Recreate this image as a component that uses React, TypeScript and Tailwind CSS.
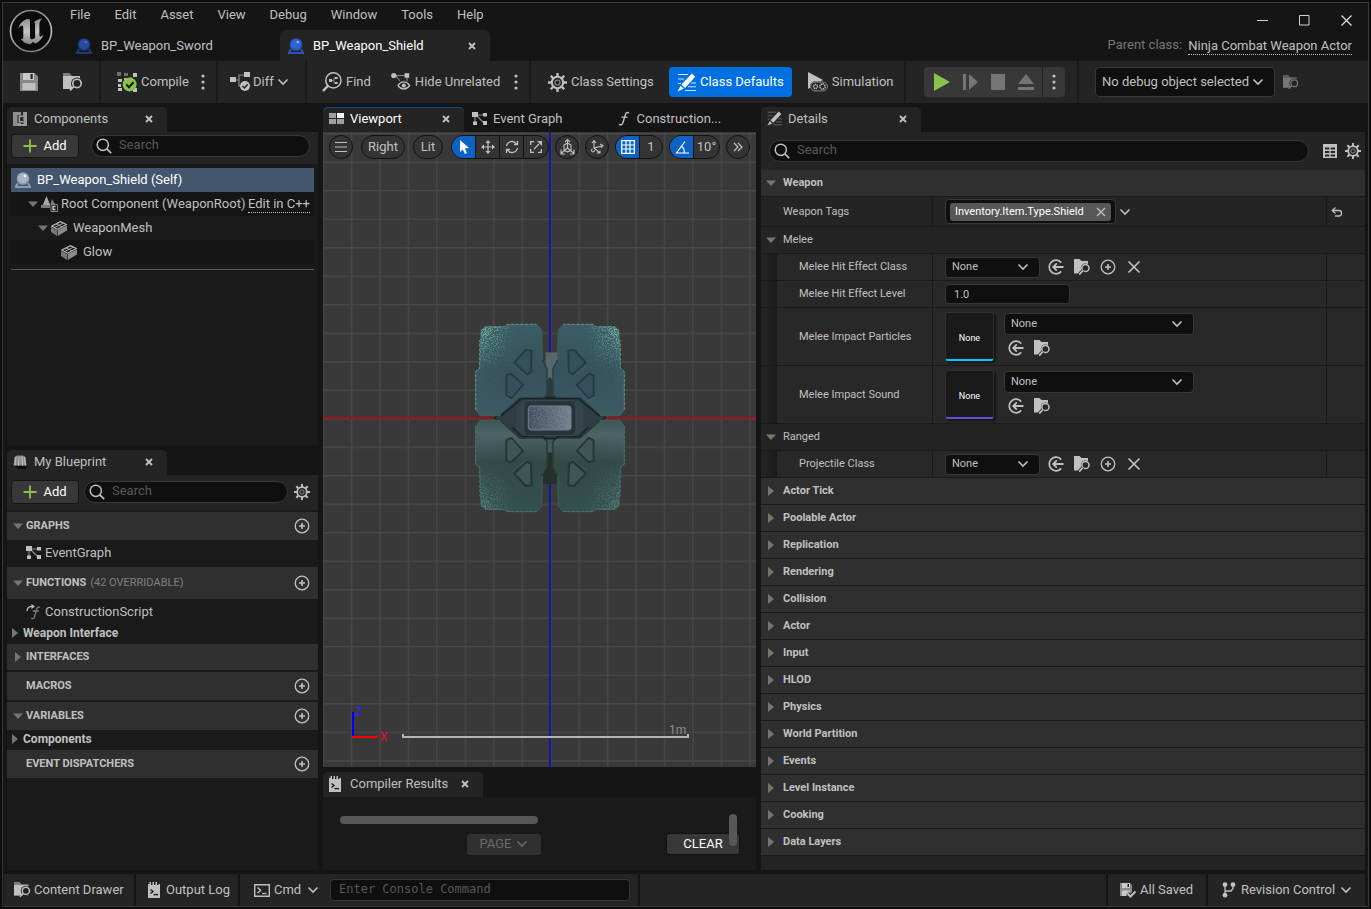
import type { ReactNode } from "react";

type Kids = { children?: ReactNode };

/* ---------- icons ---------- */

function Svg({ w = 16, h, vb, children }: { w?: number; h?: number; vb?: string } & Kids) {
  const height = h ?? w;
  return (
    <svg width={w} height={height} viewBox={vb ?? `0 0 ${w} ${height}`} fill="none" className="shrink-0" aria-hidden="true">
      {children}
    </svg>
  );
}

const Chevron = ({ color = "#c0c0c0" }: { color?: string }) => (
  <Svg w={12} h={8}>
    <path d="M1.5 1.5 6 6 10.5 1.5" stroke={color} strokeWidth="1.6" />
  </Svg>
);

const Close = ({ color = "#c0c0c0" }: { color?: string }) => (
  <Svg w={8}>
    <path d="M1 1 7 7M7 1 1 7" stroke={color} strokeWidth="1.9" />
  </Svg>
);

const BigCross = () => (
  <Svg w={14}>
    <path d="M1.5 1.5 12.5 12.5M12.5 1.5 1.5 12.5" stroke="#c0c0c0" strokeWidth="1.7" />
  </Svg>
);

const Dots = () => (
  <Svg w={4} h={16}>
    <circle cx="2" cy="2" r="1.6" fill="#c0c0c0" />
    <circle cx="2" cy="8" r="1.6" fill="#c0c0c0" />
    <circle cx="2" cy="14" r="1.6" fill="#c0c0c0" />
  </Svg>
);

const Arrow = ({ open }: { open?: boolean }) => (
  <Svg w={10}>{open ? <path d="M0 2.5h10L5 8z" fill="#757575" /> : <path d="M2 0v10l6-5z" fill="#757575" />}</Svg>
);

const SearchIcon = () => (
  <Svg w={16}>
    <circle cx="6.8" cy="6.8" r="5.6" stroke="#c0c0c0" strokeWidth="1.5" />
    <path d="m10.8 10.8 4.4 4.4" stroke="#c0c0c0" strokeWidth="1.7" />
  </Svg>
);

const PlusGreen = () => (
  <Svg w={14}>
    <path d="M7 0.5v13M0.5 7h13" stroke="#8bc24a" strokeWidth="1.8" />
  </Svg>
);

const CirclePlus = () => (
  <Svg w={16}>
    <circle cx="8" cy="8" r="6.8" stroke="#c0c0c0" strokeWidth="1.3" />
    <path d="M8 5v6M5 8h6" stroke="#c0c0c0" strokeWidth="1.6" />
  </Svg>
);

const Gear = ({ size = 16 }: { size?: number }) => (
  <Svg w={size} vb="0 0 18 18">
    <circle cx="9" cy="9" r="5.4" stroke="#c0c0c0" strokeWidth="2" />
    <circle cx="9" cy="9" r="2.4" stroke="#8c8c8c" strokeWidth="1.1" />
    <path
      d="M9 0v3.4M9 14.6V18M0 9h3.4M14.6 9H18M2.6 2.6l2.5 2.5M12.9 12.9l2.5 2.5M15.4 2.6l-2.5 2.5M5.1 12.9l-2.5 2.5"
      stroke="#c0c0c0"
      strokeWidth="2.2"
    />
  </Svg>
);

const Sphere = ({ base, ball, shine }: { base: string; ball: string; shine: string }) => (
  <Svg w={16}>
    <path d="M2.4 10.5 0 14v2h16v-2l-2.4-3.5-1.4 1.3 1.2 2.2H2.6l1.2-2.2z" fill={base} />
    <circle cx="8" cy="6.5" r="6.3" fill={base} />
    <circle cx="8" cy="6.3" r="5" fill={ball} />
    <circle cx="9.8" cy="4" r="1.3" fill={shine} />
  </Svg>
);

const Floppy = () => (
  <Svg w={18}>
    <path d="M0 0h14.5L18 3.5V18H0z" fill="#8a8a8a" />
    <path d="M3 0h11v7H3z" fill="#c8c8c8" />
    <path d="M10.5 1h2.2v5h-2.2z" fill="#242424" />
    <path d="M2.5 10h13v7h-13z" fill="#c0c0c0" />
  </Svg>
);

const BrowseFolder = ({ w = 20, dim = false, bg = "#242424" }: { w?: number; dim?: boolean; bg?: string }) => (
  <Svg w={w} h={(w * 18) / 20} vb="0 0 20 18">
    <path d="M0 0h6.5l2.5 3H0z" fill={dim ? "#5a5a5a" : "#7d7d7d"} />
    <path d="M0 3h17v13H0z" fill={dim ? "#757575" : "#c0c0c0"} />
    <circle cx="14" cy="10.4" r="6" fill={bg} />
    <path d="m12 12.5-5.5 5.5h7.5z" fill={bg} />
    <circle cx="14" cy="10.4" r="4.2" stroke={dim ? "#757575" : "#c0c0c0"} strokeWidth="1.6" />
    <path d="m11 13.4-4 4" stroke={dim ? "#757575" : "#c0c0c0"} strokeWidth="1.8" />
  </Svg>
);

const AssetBrowse = () => (
  <Svg w={18} h={16}>
    <path d="M1 0h5.5l2 2H15v3a6 6 0 0 0-6.5 8L7 14.5H1z" fill="#c0c0c0" />
    <circle cx="12.4" cy="9" r="4.6" fill="#282828" />
    <circle cx="12.4" cy="9" r="3.6" stroke="#c0c0c0" strokeWidth="1.5" />
    <path d="m9.8 11.6-3.6 4" stroke="#282828" strokeWidth="3.5" />
    <path d="m9.8 11.6-3.6 4" stroke="#c0c0c0" strokeWidth="1.7" />
  </Svg>
);

const UseSelected = () => (
  <Svg w={16}>
    <path d="M13.2 3.6A6.8 6.8 0 1 0 13.2 12.4" stroke="#c0c0c0" strokeWidth="1.7" />
    <path d="M15.5 8H5.5M8.8 4.4 5.2 8l3.6 3.6" stroke="#c0c0c0" strokeWidth="1.8" />
  </Svg>
);

const CompileIcon = () => (
  <Svg w={20}>
    <path d="M0 0h4v4H0z M7 1h4v3H7z M13 5h2v2h-2z" fill="#6f6f6f" />
    <path d="M16 1h4v4h-4z M1 7h4v3H1z M1 12h3v3H1z M1 16h4v3H1z M16 16h4v4h-4z M7 6h3v2H7z" fill="#c0c0c0" />
    <circle cx="12.6" cy="12.4" r="7" fill="#8bc24a" />
    <path d="m9.3 12.4 2.6 2.8 4.6-5" stroke="#151515" strokeWidth="2" />
  </Svg>
);

const DiffIcon = () => (
  <Svg w={20} h={20}>
    <path d="M5 8h4V3h5M9 8v6h2" stroke="#8a8a8a" strokeWidth="1.2" />
    <path d="M0 5h6v5H0z M14 0h6v5h-6z" fill="#c0c0c0" />
    <circle cx="15" cy="14" r="5" fill="#c0c0c0" />
    <path d="m12.4 14 2 2 3.3-3.8" stroke="#242424" strokeWidth="1.5" />
  </Svg>
);

const FindIcon = () => (
  <Svg w={20}>
    <circle cx="11.4" cy="8.4" r="7.6" stroke="#c0c0c0" strokeWidth="1.5" />
    <path d="M6.2 13.6 1 19" stroke="#c0c0c0" strokeWidth="2.4" />
    <path d="M7 7h3v3H7z M12.6 5h3v2h-3z M12.6 10h3v2h-3z" fill="#c0c0c0" />
    <path d="M10 8.5h2V6M12 8.5V11" stroke="#8a8a8a" />
  </Svg>
);

const HideIcon = () => (
  <Svg w={20}>
    <path d="M3 3.5h13M5 4l4 5M16 5v4" stroke="#8a8a8a" strokeWidth="1.1" />
    <circle cx="2.8" cy="3.5" r="2.6" fill="#c0c0c0" />
    <path d="M13.6 1.2h4.6v4.6h-4.6z" fill="#c0c0c0" />
    <path d="M7 13.6c3-5 8.6-5 11.6 0-3 4.4-8.6 4.4-11.6 0z" stroke="#c0c0c0" strokeWidth="1.4" />
    <circle cx="12.8" cy="13.5" r="2" fill="#c0c0c0" />
  </Svg>
);

const PencilIcon = ({ w = 19, color = "#fff", line = "#cfe3fb" }: { w?: number; color?: string; line?: string }) => (
  <Svg w={w} vb="0 0 19 19">
    <path d="M1 1.5h10M1 6h6M1 10.5h3M14 10h5M11 13.8h8M8 17.5h11" stroke={line} strokeWidth="1.1" />
    <path d="m14.8 0.5 3.4 3.2L8 15l-3.5-3.4z M3.6 12.8 6.7 15.8 0.5 18.5z" fill={color} />
  </Svg>
);

const SimulationIcon = () => (
  <Svg w={20}>
    <path d="M0 0v17L15 8z" fill="#c0c0c0" />
    <rect x="2" y="9.5" width="18" height="10" rx="5" fill="#242424" />
    <rect x="2.6" y="10.1" width="16.8" height="8.8" rx="4.4" stroke="#8a8a8a" />
    <circle cx="7.5" cy="14.5" r="2" stroke="#c0c0c0" strokeWidth="1.5" strokeDasharray="1.1 0.5" />
    <circle cx="14.5" cy="14.5" r="2.6" stroke="#c0c0c0" strokeWidth="1.6" strokeDasharray="1.3 0.7" />
  </Svg>
);

const GraphIcon = () => (
  <Svg w={15} h={14}>
    <path d="M4 3h8M4 3l8 8M3 4v8" stroke="#8a8a8a" strokeWidth="1.2" />
    <path d="M0 0h6v5H0z M11 1h4v3.5h-4z M11 9h4v4h-4z M1 9.5h4V13H1z" fill="#c0c0c0" />
  </Svg>
);

const FuncIcon = () => (
  <Svg w={12} h={15}>
    <path d="M11 2.2C9.3.8 7.8 1.6 7.2 4L5 11.5c-.6 2-2 2.8-4 2" stroke="#c0c0c0" strokeWidth="1.4" />
    <path d="M3.5 6.2h6" stroke="#c0c0c0" strokeWidth="1.3" />
  </Svg>
);

const ConstructionIcon = () => (
  <Svg w={15} h={16}>
    <path d="M14 3.5c-1.7-1-3 0-3.4 1.7l-2 7.3c-.4 1.8-1.6 2.6-3.6 2M6.8 7h6" stroke="#7c7c7c" strokeWidth="1.3" />
    <path d="M1 7c.2-3.5 2.5-4.6 5.5-4.6" stroke="#c0c0c0" strokeWidth="1.3" />
    <path d="M5.5 0v5L9 2.5z" fill="#c0c0c0" />
  </Svg>
);

const ComponentsIcon = () => (
  <Svg w={14}>
    <path d="M0 0h8v3H4.5v8H8v3H0z" fill="#8f8f8f" />
    <path d="M10 0h4v14H5v-2h5.5z" fill="#9c9c9c" />
    <path d="M10.5 4.5H6.5v5h4" stroke="#a8a8a8" strokeWidth="1.8" />
    <path d="M10.5 5.4H7.5v3.2h3" stroke="#242424" strokeWidth="1" />
  </Svg>
);

const BlueprintIcon = () => (
  <Svg w={14} h={14}>
    <path d="M1.5 2 4 .5h6L12.5 2l1 8.5H.5z" fill="#8a8a8a" />
    <path d="M3 2 2 10.5M6 1.5l-.5 9M9 1.5l.5 9M11.5 2l.8 8.5" stroke="#c0c0c0" />
    <path d="M1 11h11.5l1.5 1.5-2 1.5H6z" fill="#0c0c0c" />
  </Svg>
);

const ViewportIcon = () => (
  <Svg w={15} h={11}>
    <path d="M0 0h7v5H0z M0 6h7v5H0z M8 6h7v5H8z" fill="#a0a0a0" />
    <path d="M8 0h7v5H8z" fill="#fff" />
  </Svg>
);

const LogIcon = () => (
  <Svg w={12} h={16}>
    <path d="M0 2h1.5V0H3v3h1.5V0H6v3h1.5V0H9v3h1.5V2H12v14H0z" fill="#c0c0c0" />
    <path d="m2.5 7.5 2.5 2-2.5 2" stroke="#1a1a1a" strokeWidth="1.4" />
    <path d="M5.5 12.6H10" stroke="#1a1a1a" strokeWidth="1.4" />
  </Svg>
);

const CmdIcon = () => (
  <Svg w={16} h={13}>
    <path d="M.7.7h14.6v11.6H.7z" stroke="#c0c0c0" strokeWidth="1.4" />
    <path d="m3.5 3.5 3.2 2.8-3.2 2.8" stroke="#c0c0c0" strokeWidth="1.4" />
    <path d="M8 9.5h4.5" stroke="#c0c0c0" strokeWidth="1.3" />
  </Svg>
);

const SavedIcon = () => (
  <Svg w={16} h={15}>
    <path d="M0 0h10l2 2v11H0z" fill="#8a8a8a" />
    <path d="M2 0h8v5H2z M2 7.5h8V13H2z" fill="#c8c8c8" />
    <path d="M7.5 1h1.5v3H7.5z" fill="#242424" />
    <path d="m7.5 10.5 3 3 5-5" stroke="#242424" strokeWidth="4" />
    <path d="m7.5 10.5 3 3 5-5" stroke="#c0c0c0" strokeWidth="2" />
  </Svg>
);

const BranchIcon = () => (
  <Svg w={14} h={16}>
    <path d="M3 3v10M3 9h6l2-2.5V3" stroke="#c0c0c0" strokeWidth="1.3" />
    <circle cx="3" cy="2.7" r="2.4" fill="#c0c0c0" />
    <circle cx="11" cy="2.7" r="2.4" fill="#c0c0c0" />
    <circle cx="3" cy="13.2" r="2.4" fill="#c0c0c0" />
  </Svg>
);

const MeshIcon = () => (
  <Svg w={16} h={15}>
    <path d="M0 5.8 6 9v6L0 11z" fill="#777" />
    <path d="M6.7 9 16 4.5v5L6.7 15z" fill="#8a8a8a" />
    <path d="M.8 5 9.5.7l6 2.8L6.5 8.2z" fill="#1a1a1a" stroke="#c0c0c0" strokeWidth="1.1" />
    <path d="m3.5 6.5 8.7-4.2M5 2.9l6.2 3" stroke="#b0b0b0" strokeWidth="0.9" />
  </Svg>
);

const SceneIcon = () => (
  <Svg w={17} h={16}>
    <path d="M5.5 0 10 11H1z" fill="#a8a8a8" />
    <path d="M0 9h9v3H0z M11 3l3 5H9.5z" fill="#7a7a7a" />
    <path d="M9 8h8v8H9z" fill="#151515" />
    <path d="M10 8.5h6.5v7H10z" stroke="#8a8a8a" />
    <path d="M14.5 10.5H12v3h2.5" stroke="#d0d0d0" strokeWidth="1.3" />
  </Svg>
);

const TableIcon = () => (
  <Svg w={14}>
    <path d="M0 0h14v14H0z" fill="#c0c0c0" />
    <path d="M2 3.5h4.3v2H2zM7.7 3.5H12v2H7.7zM2 7h4.3v2H2zM7.7 7H12v2H7.7zM2 10.5h4.3v2H2zM7.7 10.5H12v2H7.7z" fill="#242424" />
  </Svg>
);

const ResetIcon = () => (
  <Svg w={12} h={10}>
    <path d="M4.5.5 1.2 3.5l3.3 3M1.5 3.5h6.8a2.8 2.8 0 0 1 0 5.5H4" stroke="#c0c0c0" strokeWidth="1.3" />
  </Svg>
);

const UnrealLogo = () => (
  <svg width="44" height="44" viewBox="0 0 44 44" fill="none" role="img" aria-label="Unreal Engine" className="shrink-0">
    <defs>
      <linearGradient id="metal" x1="0" y1="0" x2="0" y2="1">
        <stop offset="0" stopColor="#8e8e8e" />
        <stop offset="0.5" stopColor="#c4c4c4" />
        <stop offset="1" stopColor="#858585" />
      </linearGradient>
    </defs>
    <circle cx="22" cy="22" r="20.5" fill="#0b0b0b" stroke="url(#metal)" strokeWidth="1.6" />
    <path
      d="M19 9.5c-4.5 1.5-8.5 5-9.8 10.3 1.5-2.3 3.3-3.5 4.3-3.1.7.3.8 1 .8 1.9V28c0 1.8-1 2.3-2.4 2 2.1 3.1 5.2 5 9.6 5.3l2.4-2.3 2.7 1.6c4-2 6.7-5.2 8-9.1-1.4 1.5-2.7 2.4-3.6 2.1-.5-.2-.6-.7-.6-1.6V15.5c0-2.6 1.1-4.6 2.8-6.1-3.3.3-6.3 1.7-8.5 4.2.7-.3 1.4 0 1.4 1.2v14c-.8.8-2 1.5-3.1 1.4-1.3 0-2-.8-2-2.3V14c0-2 .2-3-.4-3.5-.4-.4-1-.5-1.6-1z"
      fill="url(#metal)"
    />
  </svg>
);

/* ---------- controls ---------- */

const inputBox = "rounded border border-[#383838] bg-[#0f0f0f]";

function Select({ label, value, className, id, pad = "pr-6 pl-1.5" }: { label: string; value: string; className: string; id?: string; pad?: string }) {
  return (
    <div className={`grid items-center ${className}`}>
      <select id={id} aria-label={id ? undefined : label} className={`${inputBox} col-start-1 row-start-1 h-full w-full appearance-none text-[#c0c0c0] ${pad}`}>
        <option>{value}</option>
      </select>
      <span className="pointer-events-none col-start-1 row-start-1 mr-[11px] justify-self-end">
        <Chevron />
      </span>
    </div>
  );
}

function Search({ className, label }: { className: string; label: string }) {
  return (
    <label className={`flex h-[22px] min-w-0 items-center gap-[7px] rounded-full border border-[#383838] bg-[#0f0f0f] px-1 ${className}`}>
      <SearchIcon />
      <input type="text" aria-label={label} placeholder="Search" className="w-full min-w-0 bg-transparent pb-0.5 outline-none placeholder:text-[#575757]" />
    </label>
  );
}

function AddButton() {
  return (
    <button className="flex h-6 w-[68px] shrink-0 items-center justify-center gap-1.5 rounded border border-[#151515] bg-[#383838] text-white">
      <PlusGreen />
      Add
    </button>
  );
}

function PanelTab({ icon, title, width, active = false, line = false }: { icon: ReactNode; title: string; width: string; active?: boolean; line?: boolean }) {
  return (
    <div className={`flex h-[25px] shrink-0 items-center rounded-t-[5px] bg-[#242424] pr-3.5 pb-0.5 pl-[6px] ${line ? "shadow-[inset_0_1px_0_#0b4b96]" : ""} ${width}`}>
      <span className="flex w-[21px]">{icon}</span>
      <span className={active ? "text-white" : ""}>{title}</span>
      <button aria-label={`Close ${title}`} className="ml-auto">
        <Close />
      </button>
    </div>
  );
}

/* ---------- title bar and toolbar ---------- */

const menus = ["File", "Edit", "Asset", "View", "Debug", "Window", "Tools", "Help"];

function TitleBar() {
  return (
    <header className="flex h-[58px] items-center">
      <div className="flex w-[55px] shrink-0 justify-center pb-[3px]">
        <UnrealLogo />
      </div>
      <div className="flex h-full flex-1 flex-col">
        <nav className="flex h-[27px] items-center pb-1">
          {menus.map((m) => (
            <button key={m} className="px-3">
              {m}
            </button>
          ))}
        </nav>
        <div className="flex h-[31px]">
          <div className="flex w-[222px] items-center gap-[9px] pl-[18px]">
            <Sphere base="#1f3a78" ball="#274b9e" shine="#4a6cc0" />
            BP_Weapon_Sword
          </div>
          <div className="flex w-[210px] items-center gap-[9px] rounded-t-md bg-[#242424] pr-3.5 pl-2 text-white">
            <Sphere base="#2a55b4" ball="#2f62d6" shine="#9db9ff" />
            BP_Weapon_Shield
            <button aria-label="Close BP_Weapon_Shield" className="ml-auto">
              <Close />
            </button>
          </div>
        </div>
      </div>
      <div className="flex h-full flex-col items-end pr-4">
        <div className="flex h-[34px] items-center gap-[31px]">
          <button aria-label="Minimize">
            <Svg w={11}>
              <path d="M0 5.5h11" stroke="#d0d0d0" />
            </Svg>
          </button>
          <button aria-label="Maximize">
            <Svg w={11}>
              <path d="M.5.5h9.5v9.5H.5z" stroke="#d0d0d0" />
            </Svg>
          </button>
          <button aria-label="Close window">
            <Svg w={11}>
              <path d="m.5.5 10 10M10.5.5l-10 10" stroke="#e0e0e0" strokeWidth="1.3" />
            </Svg>
          </button>
        </div>
        <p className="flex gap-1.5">
          <span className="text-[#757575]">Parent class:</span>
          <a href="#parent" className="border-b border-dotted border-[#c0c0c0] pt-px leading-4">
            Ninja Combat Weapon Actor
          </a>
        </p>
      </div>
    </header>
  );
}

function Tool({ icon, children, className = "" }: { icon: ReactNode; className?: string } & Kids) {
  return (
    <button className={`flex h-[30px] items-center gap-1 rounded ${className}`}>
      {icon}
      {children}
    </button>
  );
}

const group = "flex items-center border-r-2 border-[#1a1a1a]";

function Toolbar() {
  return (
    <div className="flex h-[42px] items-stretch bg-[#242424]" role="toolbar">
      <div className={`${group} w-[98px] gap-[25px] pl-[17px]`}>
        <button aria-label="Save"><Floppy /></button>
        <button aria-label="Browse"><BrowseFolder /></button>
      </div>
      <div className={`${group} w-[117px] justify-between pr-[11px] pl-4`}>
        <Tool icon={<CompileIcon />}>Compile</Tool>
        <button aria-label="Compile options"><Dots /></button>
      </div>
      <div className={`${group} w-[89px] pl-3`}>
        <button className="flex h-[30px] items-center gap-[3px]">
          <DiffIcon />
          Diff <Chevron />
        </button>
      </div>
      <div className={`${group} w-[224px] pr-[11px] pl-[15px]`}>
        <Tool icon={<FindIcon />}>Find</Tool>
        <Tool icon={<HideIcon />} className="ml-5">Hide Unrelated</Tool>
        <button aria-label="Hide options" className="ml-auto"><Dots /></button>
      </div>
      <div className={`${group} w-[375px] pl-[17px]`}>
        <Tool icon={<Gear size={19} />}>Class Settings</Tool>
        <Tool icon={<PencilIcon />} className="ml-[15px] w-[123px] justify-center bg-[#0070e0] text-white">Class Defaults</Tool>
        <Tool icon={<SimulationIcon />} className="ml-4">Simulation</Tool>
      </div>
      <div className={`${group} w-[173px] pl-[18px]`}>
        <div className="flex h-[30px] w-[141px] items-center rounded bg-[#383838]">
          <div className="flex flex-1 items-center justify-between pr-2 pl-2.5">
            <button aria-label="Play"><Svg w={16} h={18}><path d="M0 0v18l16-9z" fill="#8bc24a" /></Svg></button>
            <button aria-label="Step"><Svg w={16}><path d="M0 0h3v16H0z M6 0v16l9-8z" fill="#757575" /></Svg></button>
            <button aria-label="Stop"><Svg w={14} h={16}><path d="M0 0h14v16H0z" fill="#757575" /></Svg></button>
            <button aria-label="Eject"><Svg w={16}><path d="M8 0 16 10H0z M0 13h16v3H0z" fill="#757575" /></Svg></button>
          </div>
          <button aria-label="Play options" className="flex h-full w-[23px] items-center justify-center border-l border-[#1f1f1f]"><Dots /></button>
        </div>
      </div>
      <div className="flex items-center gap-2 pl-4">
        <Select label="Debug object" value="No debug object selected" pad="pr-4 pl-1.5" className="h-[30px] w-[180px]" />
        <button aria-label="Browse debug object"><BrowseFolder w={16} dim /></button>
      </div>
    </div>
  );
}

/* ---------- left column ---------- */

function Components() {
  return (
    <section className="flex grow-[338] basis-0 flex-col">
      <PanelTab icon={<ComponentsIcon />} title="Components" width="w-[160px]" />
      <div className="flex h-8 items-center justify-between bg-[#242424] pr-2 pb-1 pl-1">
        <AddButton />
        <Search label="Search components" className="w-[219px]" />
      </div>
      <ul className="flex-1 bg-[#1a1a1a] p-1">
        <li className="flex h-6 items-center gap-1.5 bg-[#44566d] pl-1 text-white">
          <Sphere base="#8f9bab" ball="#aab4c2" shine="#f4f6f8" />
          BP_Weapon_Shield (Self)
        </li>
        <li className="flex h-6 items-center bg-[#151515] pr-1 pl-[17px]">
          <Arrow open />
          <span className="mx-[3px] flex"><SceneIcon /></span>
          Root Component (WeaponRoot)
          <a href="#cpp" className="ml-auto border-b border-dotted border-[#c0c0c0] leading-4">Edit in C++</a>
        </li>
        <li className="flex h-6 items-center pl-[27px]">
          <Arrow open />
          <span className="mr-1.5 ml-[3px] flex"><MeshIcon /></span>
          WeaponMesh
        </li>
        <li className="flex h-6 items-center gap-1.5 bg-[#151515] pl-[50px]">
          <MeshIcon />
          Glow
        </li>
        <li className="mt-[5px] border-t border-[#5a5a5a]" role="separator" />
      </ul>
    </section>
  );
}

function BpHeader({ title, note, height, arrow, add = true }: { title: string; note?: string; height: string; arrow?: "open" | "closed"; add?: boolean }) {
  return (
    <div className={`flex items-center bg-[#2f2f2f] pr-2 pl-1.5 text-[11px] ${height}`}>
      <span className="flex w-[13px]">{arrow && <Arrow open={arrow === "open"} />}</span>
      <h3 className="font-bold">{title}</h3>
      {note && <span className="ml-1 text-[#808080]">{note}</span>}
      {add && (
        <button aria-label={`Add to ${title}`} className="ml-auto">
          <CirclePlus />
        </button>
      )}
    </div>
  );
}

function BpCategory({ title }: { title: string }) {
  return (
    <div className="flex h-5 items-center gap-[3px] pb-[3px] pl-[3px] text-[12px] font-bold">
      <span className="flex"><Arrow /></span>
      <span>{title}</span>
    </div>
  );
}

function MyBlueprint() {
  return (
    <section className="flex grow-[420] basis-0 flex-col">
      <PanelTab icon={<BlueprintIcon />} title="My Blueprint" width="w-[160px]" />
      <div className="flex h-[35px] items-center gap-1.5 bg-[#242424] pr-2 pb-0.5 pl-1">
        <AddButton />
        <Search label="Search blueprint" className="-ml-px flex-1" />
        <button aria-label="Blueprint settings"><Gear /></button>
      </div>
      <div className="flex-1 bg-[#1a1a1a] pt-0.5">
        <BpHeader title="GRAPHS" height="h-7" arrow="open" />
        <div className="flex h-[27px] items-center gap-1 pb-0.5 pl-[19px]">
          <GraphIcon />
          EventGraph
        </div>
        <BpHeader title="FUNCTIONS" note="(42 OVERRIDABLE)" height="h-8" arrow="open" />
        <div className="flex h-[25px] items-center gap-1 pl-[19px]">
          <ConstructionIcon />
          ConstructionScript
        </div>
        <BpCategory title="Weapon Interface" />
        <div className="space-y-0.5">
          <BpHeader title="INTERFACES" height="h-[26px]" arrow="closed" add={false} />
          <BpHeader title="MACROS" height="h-7" />
          <BpHeader title="VARIABLES" height="h-7" arrow="open" />
        </div>
        <BpCategory title="Components" />
        <BpHeader title="EVENT DISPATCHERS" height="h-7" />
      </div>
    </section>
  );
}

/* ---------- centre column ---------- */

const plate = "M48 62 60 50h58l8-7h89l15 17 2 90 14 25v80l-12 10h-70l-58 52H45l-13-18V185l12-10z";

function ShieldPlate({ fill, groove, face, bright, transform }: { fill: string; groove: string; face: string; bright: number; transform?: string }) {
  return (
    <g transform={transform}>
      <path d={plate} fill={fill} stroke="#3e5f60" strokeWidth="3" />
      <path d={plate} fill="url(#edge)" opacity={bright} />
      <path d={plate} fill="url(#corner)" filter="url(#speckle)" opacity={bright} />
      <path d="M48 62 60 50h58l8-7h89M32 300V185l12-10V90" stroke="#5f9389" strokeWidth="3" strokeDasharray="9 5" opacity={bright} />
      <path d="M232 150l14 26v78l-12 10h-70l-58 52" stroke={groove} strokeWidth="4" />
      <path d="m148 158 34-38 18 2-2 64-12 7z" fill={face} stroke={groove} strokeWidth="6" strokeLinejoin="round" />
      <path d="m124 196 14-5 37 34-35 40-16-8z" fill={face} stroke={groove} strokeWidth="6" strokeLinejoin="round" />
      <path d="m144 166 40 31M120 262l18 9 40-44" stroke="#5d7a7d" strokeOpacity="0.5" strokeWidth="2" />
    </g>
  );
}

function Scene() {
  return (
    <svg viewBox="0 0 433 635" preserveAspectRatio="xMidYMid slice" fill="none" className="col-start-1 row-start-1 h-full w-full" role="img" aria-label="Shield mesh preview">
      <defs>
        <pattern id="grid" x="227" y="286" width="28.45" height="28.5" patternUnits="userSpaceOnUse">
          <path d="M0 .7h28.45M.7 0v28.5" stroke="#484848" strokeWidth="1.4" />
        </pattern>
        <filter id="speckle" x="0" y="0" width="1" height="1">
          <feTurbulence type="fractalNoise" baseFrequency="0.28" numOctaves="2" seed="4" />
          <feColorMatrix type="matrix" values="0 0 0 0 0  0 0 0 0 0  0 0 0 0 0  10 0 0 0 -4.8" result="dots" />
          <feComposite in="SourceGraphic" in2="dots" operator="in" />
        </filter>
        <radialGradient id="corner" cx="0.08" cy="0.05" r="0.75">
          <stop offset="0" stopColor="#7cb8a9" stopOpacity="0.9" />
          <stop offset="0.3" stopColor="#6fa89e" stopOpacity="0.55" />
          <stop offset="0.6" stopColor="#5b8f90" stopOpacity="0.12" />
          <stop offset="1" stopColor="#5b8f90" stopOpacity="0.05" />
        </radialGradient>
        <linearGradient id="edge" x1="0" y1="0" x2="0.6" y2="0.3">
          <stop offset="0" stopColor="#6ba398" stopOpacity="0.7" />
          <stop offset="0.4" stopColor="#4c7f82" stopOpacity="0.12" />
          <stop offset="1" stopColor="#375560" stopOpacity="0" />
        </linearGradient>
        <linearGradient id="upper" x1="0" y1="0" x2="0" y2="1">
          <stop offset="0" stopColor="#3a5b62" />
          <stop offset="0.5" stopColor="#36505c" />
          <stop offset="1" stopColor="#3c5961" />
        </linearGradient>
        <linearGradient id="lower" x1="0" y1="0" x2="0" y2="1">
          <stop offset="0" stopColor="#33504c" />
          <stop offset="0.55" stopColor="#344846" />
          <stop offset="0.85" stopColor="#4d6466" />
          <stop offset="1" stopColor="#3c5555" />
        </linearGradient>
        <linearGradient id="screen" x1="0" y1="0" x2="1" y2="0">
          <stop offset="0" stopColor="#414d60" />
          <stop offset="1" stopColor="#74808e" />
        </linearGradient>
      </defs>
      <path d="M0 0h433v635H0z" fill="#393939" />
      <path d="M0 0h433v635H0z" fill="url(#grid)" />
      <path d="M227 0v635" stroke="#1414a6" strokeWidth="2" />
      <path d="M0 286h433" stroke="#a01414" strokeWidth="2" />
      <g transform="translate(142 178) scale(.3333)">
        <path d="M242 127h38v140h-38z" fill="#56686a" />
        <path d="M242 215l12-14 14 14v50h-26z" fill="#2c3a3c" />
        <path d="M232 380h46v142h-46z" fill="#243029" />
        <path d="M244 388h22v40h-22z" fill="#46565a" />
        <path d="M88 323 165 262h180l76 61-76 62H165z" fill="#2c3c3e" stroke="#1b2628" strokeWidth="4" />
        <ShieldPlate fill="url(#upper)" groove="#263b44" face="#33505c" bright={1} />
        <ShieldPlate fill="url(#upper)" groove="#263b44" face="#33505c" bright={1} transform="translate(510 0) scale(-1 1)" />
        <ShieldPlate fill="url(#lower)" groove="#263634" face="#3f5556" bright={0.45} transform="translate(0 648) scale(1 -1)" />
        <ShieldPlate fill="url(#lower)" groove="#263634" face="#3f5556" bright={0.45} transform="translate(510 648) scale(-1 -1)" />
        <path d="M110 323 172 270h166l62 53-62 58H172z" fill="#2f3f41" />
        <path d="M154 290 176 270v108l-22-20zM356 290l-22-20v108l22-20z" fill="#34444a" />
        <rect x="176" y="272" width="157" height="105" rx="16" fill="#27353a" stroke="#3c4c52" strokeWidth="3" />
        <rect x="190" y="288" width="128" height="72" rx="8" fill="url(#screen)" stroke="#76828f" strokeWidth="3" />
        <path d="M192 290h124v68H192z" fill="#a3b0c0" fillOpacity="0.2" filter="url(#speckle)" />
        <path d="M108 318l62-52h172l62 52M142 352l28 28h64l8 6h30l8-6h62l28-28" stroke="#172124" strokeWidth="4" />
      </g>
      <path d="M30 580v25" stroke="#0000ff" strokeWidth="2" />
      <path d="M29 605h26" stroke="#ff0000" strokeWidth="2" />
      <path d="M80 602v3h285v-3" stroke="#b4b4b4" strokeWidth="2" />
      <text x="32" y="584" fill="#2a2aff" fontSize="12">Z</text>
      <text x="57" y="609" fill="#e81010" fontSize="12">X</text>
      <text x="346" y="602" fill="#8c8c8c" fontSize="12">1m</text>
    </svg>
  );
}

const pill = "flex h-6 shrink-0 items-center justify-center overflow-hidden rounded-full border border-[#111] bg-[#343434]";
const seg = "flex h-full w-6 items-center justify-center";

function ViewportBar() {
  return (
    <div className="col-start-1 row-start-1 flex items-center justify-between self-start px-1.5 pt-[3px]">
      <div className="flex gap-2">
        <button aria-label="Viewport menu" className={`${pill} w-6`}>
          <Svg w={12}><path d="M0 1.5h12M0 6h12M0 10.5h12" stroke="#c0c0c0" strokeWidth="1.2" /></Svg>
        </button>
        <button className={`${pill} w-11`}>Right</button>
        <button className={`${pill} w-[30px]`}>Lit</button>
        <div className={`${pill} divide-x divide-[#111]`}>
          <button aria-label="Select" className={`${seg} bg-[#0d62c4]`}>
            <Svg w={12} h={14}><path d="m2 0 9 8-4.2.6L9 13l-2.2 1-2-4.6L2 12z" fill="#fff" /></Svg>
          </button>
          <button aria-label="Move" className={seg}>
            <Svg w={14}><path d="M7 1v12M1 7h12" stroke="#c0c0c0" strokeWidth="1.2" /><path d="m7 0 2.5 3h-5zM7 14l2.5-3h-5zM0 7l3-2.5v5zM14 7l-3-2.5v5z" fill="#c0c0c0" /></Svg>
          </button>
          <button aria-label="Rotate" className={seg}>
            <Svg w={14}><path d="M1.5 6A5.5 5.5 0 0 1 11.5 4M12.5 8A5.5 5.5 0 0 1 2.5 10M12.5 1v3.5H9M1.5 13V9.5H5" stroke="#c0c0c0" strokeWidth="1.3" /></Svg>
          </button>
          <button aria-label="Scale" className={seg}>
            <Svg w={12}><path d="M.7 4V.7H4M.7 8v3.3H4M8 11.3h3.3V8" stroke="#c0c0c0" strokeWidth="1.3" /><path d="M4 8l5-5" stroke="#c0c0c0" strokeWidth="1.3" /><path d="M7 0h5v5z" fill="#c0c0c0" /></Svg>
          </button>
        </div>
      </div>
      <div className="flex gap-1.5">
        <button aria-label="World space" className={`${pill} w-6`}>
          <Svg w={15} h={16}><path d="M7.5 1v8M7.5 9l-6 5M7.5 9l6 5M5 3l2.5-2.5L10 3M1 10.5V15h4M14 10.5V15h-4M4 11V6l3.5-2L11 6v5l-3.5 2z" stroke="#c0c0c0" strokeWidth="1.1" /></Svg>
        </button>
        <button aria-label="Surface snapping" className={`${pill} w-6`}>
          <Svg w={15}><path d="M4 1v7l8-2M4 8l6 5M2 3l2-2.5L6 3M10 4l3 1.500L11 8M10 10.500V13H7M2.500 9a1.500 1.500 0 1 0 2 1" stroke="#c0c0c0" strokeWidth="1.1" /></Svg>
        </button>
        <div className={`${pill} divide-x divide-[#111]`}>
          <button aria-label="Grid snap" className={`${seg} bg-[#0d62c4]`}>
            <Svg w={14}><path d="M.7.7h12.6v12.6H.7zM5 .5v13M9 .5v13M.5 5h13M.5 9h13" stroke="#fff" strokeWidth="1.2" /></Svg>
          </button>
          <button className="w-[22px]">1</button>
        </div>
        <div className={`${pill} divide-x divide-[#111]`}>
          <button aria-label="Rotation snap" className={`${seg} bg-[#0d62c4]`}>
            <Svg w={14} h={13}><path d="M10 .5 1.5 12H14M6.5 5.5c2 1 3 3.5 2.8 6.5" stroke="#fff" strokeWidth="1.2" /></Svg>
          </button>
          <button className="w-[25px]">10°</button>
        </div>
        <button aria-label="More" className={`${pill} w-6`}>
          <Svg w={10}><path d="m1 1 4 4-4 4M5 1l4 4-4 4" stroke="#c0c0c0" strokeWidth="1.2" /></Svg>
        </button>
      </div>
    </div>
  );
}

function Viewport() {
  return (
    <section className="flex grow-[660] basis-0 flex-col">
      <div className="flex">
        <PanelTab icon={<ViewportIcon />} title="Viewport" width="w-[141px]" active line />
        <div className="flex items-center pb-0.5 pl-2">
          <span className="flex w-[21px]"><GraphIcon /></span>
          Event Graph
        </div>
        <div className="flex items-center pb-0.5 pl-[55px]">
          <span className="flex w-[19px]"><FuncIcon /></span>
          Construction...
        </div>
      </div>
      <div className="grid flex-1">
        <Scene />
        <ViewportBar />
      </div>
    </section>
  );
}

function CompilerResults() {
  return (
    <section className="flex grow-[98] basis-0 flex-col">
      <PanelTab icon={<LogIcon />} title="Compiler Results" width="w-[160px]" />
      <div className="relative flex-1 bg-[#1a1a1a] pt-[19px] pl-[17px]">
        <div className="h-2 w-[198px] rounded-full bg-[#575757]" />
        <div className="flex items-center justify-between pt-[9px] pr-4 pl-[127px]">
          <button disabled className="flex h-[21px] w-[74px] items-center justify-center gap-[5px] rounded-[3px] bg-[#303030] text-[#6a6a6a]">
            PAGE <Chevron color="#6a6a6a" />
          </button>
          <button className="h-[22px] w-[74px] rounded-[3px] border border-[#111] bg-[#383838] text-white">CLEAR</button>
        </div>
        <div className="absolute top-[17px] right-[19px] h-8 w-2 rounded-full bg-[#575757]" />
      </div>
    </section>
  );
}

/* ---------- details ---------- */

const rowLine = "border-b border-[#1a1a1a]";

function Category({ title, open = false }: { title: string; open?: boolean }) {
  return (
    <h3 className={`flex h-[27px] items-center gap-[7px] bg-[#2f2f2f] pl-[5px] font-bold ${rowLine}`}>
      <Arrow open={open} />
      {title}
    </h3>
  );
}

function SubCategory({ title }: { title: string }) {
  return (
    <h4 className={`flex h-[27px] items-center gap-[7px] bg-[#242424] pl-[5px] ${rowLine}`}>
      <Arrow open />
      {title}
    </h4>
  );
}

function Row({ label, id, height = "h-[27px]", nested = true, reset = false, children }: { label: string; id: string; height?: string; nested?: boolean; reset?: boolean } & Kids) {
  return (
    <div className={`flex ${height} ${rowLine} ${nested ? "bg-[#282828]" : "bg-[#242424]"}`}>
      {nested && <div className="w-4 shrink-0 border-r border-[#1a1a1a] bg-linear-to-r from-[#242424] to-[#1c1c1c]" />}
      <div className={`flex shrink-0 items-center border-r border-[#1a1a1a] pl-[22px] ${nested ? "w-[156px]" : "w-[172px]"}`}>
        <label htmlFor={id}>{label}</label>
      </div>
      <div className="flex flex-1 items-center pl-3">{children}</div>
      <div className="flex w-[39px] items-center border-l border-[#1a1a1a] pl-1">
        {reset && (
          <button aria-label={`Reset ${label}`}>
            <ResetIcon />
          </button>
        )}
      </div>
    </div>
  );
}

function ClassPicker({ id }: { id: string }) {
  return (
    <>
      <Select id={id} label="Class" value="None" className="h-[21px] w-[95px]" />
      <div className="ml-2 flex items-center gap-2.5">
        <button aria-label="Use selected asset"><UseSelected /></button>
        <button aria-label="Browse to asset" className="-mx-px"><AssetBrowse /></button>
        <button aria-label="Create new"><CirclePlus /></button>
        <button aria-label="Clear" className="px-px"><BigCross /></button>
      </div>
    </>
  );
}

function AssetPicker({ id, bar }: { id: string; bar: string }) {
  return (
    <>
      <div className={`flex size-[49px] items-center justify-center rounded-[3px] border border-b-2 border-[#303030] bg-[#1a1a1a] pt-1 text-[9px] text-white shadow-[2px_2px_2px_#161616] ${bar}`}>None</div>
      <div className="ml-2.5 flex flex-col gap-0.5 pb-0.5">
        <Select id={id} label="Asset" value="None" className="h-[22px] w-[190px]" />
        <div className="flex h-[22px] items-center gap-2.5 pl-1">
          <button aria-label="Use selected asset"><UseSelected /></button>
          <button aria-label="Browse to asset" className="-mx-px"><AssetBrowse /></button>
        </div>
      </div>
    </>
  );
}

const categories = ["Actor Tick", "Poolable Actor", "Replication", "Rendering", "Collision", "Actor", "Input", "HLOD", "Physics", "World Partition", "Events", "Level Instance", "Cooking", "Data Layers"];

function Details() {
  return (
    <section className="flex min-w-0 flex-col">
      <PanelTab icon={<PencilIcon w={15} color="#c0c0c0" line="#6a6a6a" />} title="Details" width="w-[160px]" />
      <div className="flex h-[38px] items-center bg-[#242424] pr-1">
        <Search label="Search details" className="ml-2 flex-1" />
        <button aria-label="Property matrix" className="ml-3.5"><TableIcon /></button>
        <button aria-label="Details settings" className="ml-2"><Gear /></button>
      </div>
      <div className="flex-1 bg-[#242424] text-[11px]">
        <Category title="Weapon" open />
        <Row label="Weapon Tags" id="tags" height="h-[30px]" nested={false} reset>
          <div id="tags" className={`${inputBox} flex h-[25px] w-[171px] items-center px-1`}>
            <span className="flex h-[18px] flex-1 items-center justify-between rounded-[3px] bg-[#575757] px-[5px] text-white">
              Inventory.Item.Type.Shield
              <button aria-label="Remove tag">
                <Svg w={10}><path d="m1 1 8 8M9 1 1 9" stroke="#c0c0c0" strokeWidth="1.3" /></Svg>
              </button>
            </span>
          </div>
          <button aria-label="Choose tags" className="ml-[3px]"><Chevron /></button>
        </Row>
        <SubCategory title="Melee" />
        <Row label="Melee Hit Effect Class" id="hit-class"><ClassPicker id="hit-class" /></Row>
        <Row label="Melee Hit Effect Level" id="hit-level">
          <input id="hit-level" type="text" defaultValue="1.0" className={`${inputBox} h-5 w-[125px] px-2`} />
        </Row>
        <Row label="Melee Impact Particles" id="particles" height="h-[58px]"><AssetPicker id="particles" bar="border-b-[#00c8ff]" /></Row>
        <Row label="Melee Impact Sound" id="sound" height="h-[58px]"><AssetPicker id="sound" bar="border-b-[#6050d8]" /></Row>
        <SubCategory title="Ranged" />
        <Row label="Projectile Class" id="projectile"><ClassPicker id="projectile" /></Row>
        {categories.map((c) => (
          <Category key={c} title={c} />
        ))}
      </div>
    </section>
  );
}

/* ---------- status bar ---------- */

function StatusBar() {
  return (
    <footer className="flex h-8 gap-0.5 pr-[3px] pl-px [&>*]:bg-[#242424]">
      <button className="flex w-[130px] items-center gap-[3px] pl-2.5"><BrowseFolder w={17} />Content Drawer</button>
      <button className="flex w-[102px] items-center gap-1.5 pl-3"><LogIcon />Output Log</button>
      <div className="flex w-[398px] items-center pl-3.5">
        <button className="flex w-[76px] items-center gap-1"><CmdIcon />Cmd <span className="ml-0.5"><Chevron /></span></button>
        <input type="text" aria-label="Console command" placeholder="Enter Console Command" className={`${inputBox} h-[22px] w-[300px] px-2 pb-0.5 font-['DejaVu_Sans_Mono',monospace] text-[12px] placeholder:text-[#575757]`} />
      </div>
      <div className="flex-1" />
      <button className="flex w-[98px] items-center gap-1 pl-3"><SavedIcon />All Saved</button>
      <button className="flex w-[157px] items-center gap-[5px] pl-3.5"><BranchIcon />Revision Control<Chevron /></button>
    </footer>
  );
}

export default function App() {
  return (
    <div className="flex min-h-screen bg-[#0c0c0c] p-0.5 font-['Roboto',sans-serif] text-[13px] leading-4 text-[#c0c0c0]">
      <div className="flex flex-1 flex-col border border-[#383838] bg-[#151515]">
        <TitleBar />
        <Toolbar />
        <main className="grid flex-1 grid-cols-[311fr_433fr_604fr] gap-[5px] py-1 pr-[3px] pl-1">
          <div className="flex min-w-0 flex-col gap-[5px]">
            <Components />
            <MyBlueprint />
          </div>
          <div className="flex min-w-0 flex-col gap-[5px]">
            <Viewport />
            <CompilerResults />
          </div>
          <Details />
        </main>
        <StatusBar />
      </div>
    </div>
  );
}
